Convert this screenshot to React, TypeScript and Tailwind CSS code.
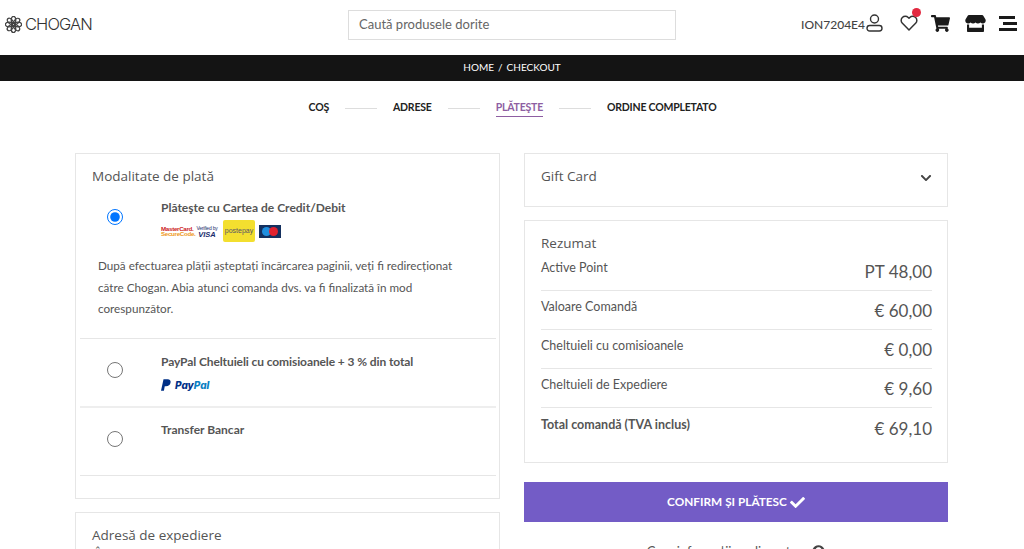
import { FaCheck, FaChevronDown, FaQuestionCircle, FaShoppingCart, FaStore } from "react-icons/fa";
import { FiHeart } from "react-icons/fi";

const summary = [
  { label: "Active Point", value: "PT 48,00" },
  { label: "Valoare Comandă", value: "€ 60,00" },
  { label: "Cheltuieli cu comisioanele", value: "€ 0,00" },
  { label: "Cheltuieli de Expediere", value: "€ 9,60" },
  { label: "Total comandă (TVA inclus)", value: "€ 69,10", bold: true },
];

const steps = ["COŞ", "ADRESE", "PLĂTEŞTE", "ORDINE COMPLETATO"];

function Logo() {
  const petals = [0, 45, 90, 135, 180, 225, 270, 315];
  return (
    <div className="flex items-center gap-[3px]">
      <svg width="17" height="17" viewBox="0 0 24 24" fill="none" stroke="#444" strokeWidth="1.8">
        {petals.map(a => (
          <ellipse key={a} cx="12" cy="5.5" rx="3.2" ry="5" transform={`rotate(${a} 12 12)`} />
        ))}
        <circle cx="12" cy="12" r="3" />
      </svg>
      <span className="font-['Inter',sans-serif] text-[16.5px] font-light text-[#333] tracking-[-0.9px]">CHOGAN</span>
    </div>
  );
}

function UserIcon() {
  return (
    <svg width="17" height="18" viewBox="0 0 17 18" fill="none" stroke="#333" strokeWidth="1.4">
      <circle cx="8.5" cy="5" r="4" />
      <rect x="1" y="11.5" width="15" height="5.5" rx="2.7" />
    </svg>
  );
}

function CardLogos() {
  return (
    <div className="flex items-center h-[22px] mt-[4px]">
      <div className="w-[29px] leading-[5.5px] text-[6.2px] font-bold tracking-[-0.3px] font-['Liberation_Sans',sans-serif] text-center">
        <div className="text-[#cc2222]">MasterCard.</div>
        <div className="text-[#ee9922]">SecureCode.</div>
      </div>
      <div className="w-[22px] ml-[6px] text-center font-['Liberation_Sans',sans-serif] text-[#1a2a6c]">
        <div className="text-[5px] leading-[6px] whitespace-nowrap tracking-[-0.2px]">Verified by</div>
        <div className="text-[7.5px] leading-[7px] font-bold italic">VISA</div>
      </div>
      <div className="w-[32px] h-[22px] ml-[5px] rounded-[2px] bg-[#f3df2f] flex items-center justify-center text-[7px] text-[#556] font-['Liberation_Sans',sans-serif]">
        postepay
      </div>
      <div className="w-[22px] h-[13px] ml-[4px] bg-[#14305f] flex items-center justify-center">
        <span className="w-[9px] h-[9px] rounded-full bg-[#1f8fe0]" />
        <span className="w-[9px] h-[9px] rounded-full bg-[#e0222f] -ml-[2px]" />
      </div>
    </div>
  );
}

function PayPalLogo() {
  return (
    <div className="flex items-center gap-[4px] mt-[9px] h-[12px]">
      <svg width="10" height="12" viewBox="0 0 24 28" fill="#003087">
        <path d="M6 0h10c5 0 8 3 7 8-1 6-5 9-11 9H9l-2 11H0z" />
      </svg>
      <span className="font-['Inter',sans-serif] text-[10px] font-extrabold italic leading-none">
        <span className="text-[#003087]">Pay</span>
        <span className="text-[#0a7fc2]">Pal</span>
      </span>
    </div>
  );
}

type PayRowProps = {
  className: string;
  radioClass: string;
  title: React.ReactNode;
  checked?: boolean;
  logo?: React.ReactNode;
  children?: React.ReactNode;
};

function PayRow({ className, radioClass, title, checked, logo, children }: PayRowProps) {
  return (
    <div className={className}>
      <div className="flex">
        <div className="w-[81px] shrink-0 pl-[27px]">
          <input type="radio" name="pay" defaultChecked={checked} className={`block w-4 h-4 m-0 ${radioClass}`} />
        </div>
        <div>
          <div className="text-[12px] font-bold text-[#555] leading-[16px]">{title}</div>
          {logo}
        </div>
      </div>
      {children}
    </div>
  );
}

export default function App() {
  return (
    <div className="h-[549px] overflow-hidden bg-white font-['Lato',sans-serif]">
      <header className="h-[55px] flex items-center pb-[6px]">
        <div className="pl-[5px] w-[348px]"><Logo /></div>
        <div className="w-[328px] h-[30px] border border-[#ddd] flex items-center px-[10px] text-[13px] text-[#666]">Caută produsele dorite</div>
        <div className="flex items-center ml-auto pr-[7px] text-[#333]">
          <span className="text-[12px] font-medium text-[#444] mr-[1px]">ION7204E4</span>
          <div className="flex items-center mb-[3px]">
            <UserIcon />
            <div className="relative ml-[17px]">
              <FiHeart className="w-[18px] h-[18px] text-[#333]" />
              <span className="absolute -top-[6px] left-[12px] w-[9px] h-[9px] rounded-full bg-[#e2283f]" />
            </div>
            <FaShoppingCart className="w-[19px] h-[17px] ml-[13px] text-[#1a1a1a]" />
            <FaStore className="w-[21px] h-[17px] ml-[15px] text-[#1a1a1a]" />
            <div className="ml-[13px] w-[18px] flex flex-col gap-[3px]">
              <span className="h-[3px] w-[16px] bg-[#1a1a1a]" />
              <span className="h-[3px] w-[14px] ml-[4px] bg-[#1a1a1a]" />
              <span className="h-[3px] w-[18px] bg-[#1a1a1a]" />
            </div>
          </div>
        </div>
      </header>

      <div className="h-[26px] bg-[#141414] flex items-center justify-center pb-[2px] text-[10px] text-white gap-[4px]">
        <span>HOME</span><span>/</span><span>CHECKOUT</span>
      </div>

      <div className="h-[72px] flex items-start justify-center pt-[18px] pl-[1px]">
        {steps.map((s, i) => (
          <div key={s} className="flex items-center">
            {i > 0 && <span className="w-[32px] h-px bg-[#ddd] mx-[16px]" />}
            <span className={`text-[10.5px] font-bold leading-[17px] tracking-[-0.2px] ${i === 2 ? "text-[#8e5ea2] border-b border-[#8e5ea2]" : "text-[#222] border-b border-transparent"}`}>{s}</span>
          </div>
        ))}
      </div>

      <div className="flex gap-[24px] pl-[75px]">
        <div className="w-[425px] shrink-0">
          <div className="h-[346px] border border-[#e6e6e6] pt-[14px] pl-[4px] pr-[3px]">
            <h3 className="pl-[12px] font-['Open_Sans',sans-serif] text-[13.5px] text-[#555] leading-[17px]">Modalitate de plată</h3>
            <PayRow
              className="h-[154px] pt-[15px] border-b border-[#e6e6e6]"
              radioClass="mt-[9px]"
              title="Plăteşte cu Cartea de Credit/Debit"
              checked
              logo={<CardLogos />}
            >
              <p className="pl-[18px] pr-[20px] mt-[13px] text-[11.7px] leading-[21.5px] text-[#555]">
                După efectuarea plății așteptați încărcarea paginii, veți fi redirecționat către Chogan. Abia atunci comanda dvs. va fi finalizată în mod corespunzător.
              </p>
            </PayRow>
            <PayRow
              className="h-[69px] pt-[15px] border-b-2 border-[#eeeeee]"
              radioClass="mt-[8px]"
              title={<span className="tracking-[-0.1px]">PayPal Cheltuieli cu comisioanele + 3 % din total</span>}
              logo={<PayPalLogo />}
            />
            <PayRow
              className="h-[68px] pt-[14px] border-b border-[#e6e6e6]"
              radioClass="mt-[9px]"
              title="Transfer Bancar"
            />
          </div>
          <div className="h-[60px] mt-[13px] border border-[#e6e6e6] pt-[14px] px-[16px]">
            <h3 className="font-['Open_Sans',sans-serif] text-[13.5px] text-[#555] leading-[17px]">Adresă de expediere</h3>
            <p className="text-[12.5px] text-[#555] mt-[2px] ml-[4px]">Î</p>
          </div>
        </div>

        <div className="w-[424px] shrink-0">
          <div className="h-[54px] border border-[#e6e6e6] flex items-start justify-between pt-[14px] pl-[16px] pr-[15px]">
            <h3 className="font-['Open_Sans',sans-serif] text-[13.5px] text-[#555] leading-[17px]">Gift Card</h3>
            <FaChevronDown className="w-[12px] h-[12px] mt-[4px] text-[#444]" />
          </div>
          <div className="h-[243px] mt-[13px] border border-[#e6e6e6] pt-[14px] pl-[16px] pr-[15px]">
            <h3 className="font-['Open_Sans',sans-serif] text-[13.5px] text-[#555] leading-[17px]">Rezumat</h3>
            {summary.map((r, i) => (
              <div key={r.label} className={`h-[39px] flex justify-between ${i < 4 ? "border-b border-[#e6e6e6]" : ""}`}>
                <span className={`text-[12.5px] text-[#555] ${r.bold ? "font-bold pt-[8px]" : "pt-[7px]"}`}>{r.label}</span>
                <span className={`text-[17px] text-[#555] ${r.bold ? "pt-[8px]" : "pt-[7px]"}`}>{r.value}</span>
              </div>
            ))}
          </div>
          <button className="w-full h-[40px] mt-[19px] bg-[#735cc6] text-white text-[11.8px] font-bold flex items-center justify-center gap-[3px]">
            CONFIRM ȘI PLĂTESC <FaCheck className="w-[15px] h-[15px]" />
          </button>
          <div className="mt-[20px] flex items-center justify-center gap-[4px] text-[13px] text-[#555]">
            Cere informații suplimentare <FaQuestionCircle className="w-[13px] h-[13px] text-[#444]" />
          </div>
        </div>
      </div>
    </div>
  );
}
